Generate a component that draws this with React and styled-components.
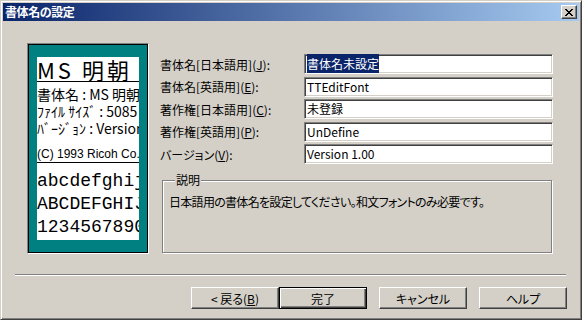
import styled, { createGlobalStyle, css } from 'styled-components'

const GlobalStyle = createGlobalStyle`
  html, body {
    margin: 0;
    padding: 0;
    background: #d4d0c8;
  }
  body {
    font-family: "Noto Sans CJK JP", "Liberation Sans", sans-serif;
    font-size: 12px;
    color: #000;
    font-feature-settings: "palt";
  }
  * { box-sizing: border-box; }
`

const raised = css`
  border: 1px solid;
  border-color: #fff #404040 #404040 #fff;
  box-shadow: inset -1px -1px #808080, inset 1px 1px #d4d0c8;
`

const Window = styled.div`
  width: 582px;
  height: 320px;
  display: flex;
  flex-direction: column;
  background: #d4d0c8;
  border: 1px solid;
  border-color: #d4d0c8 #404040 #404040 #d4d0c8;
  box-shadow: inset 1px 1px #fff, inset -1px -1px #808080;
  padding: 2px;
`

const TitleBar = styled.div`
  height: 18px;
  display: flex;
  align-items: center;
  justify-content: space-between;
  padding: 0 2px;
  background: linear-gradient(to right, #0a246a, #a6caf0);
`

const Title = styled.span`
  color: #fff;
  font-weight: bold;
  font-size: 12px;
  line-height: 18px;
  letter-spacing: -0.4px;
`

const CloseBtn = styled.div`
  width: 16px;
  height: 14px;
  display: flex;
  align-items: center;
  justify-content: center;
  background: #d4d0c8;
  ${raised}
`

const Main = styled.div`
  display: flex;
  padding: 22px 0 0 24px;
`

const Preview = styled.div`
  width: 122px;
  height: 211px;
  border: 1px solid;
  border-color: #808080 #fff #fff #808080;
`

const PreviewFrame = styled.div`
  height: 100%;
  border: 1px solid #000;
  background: #008080;
  padding: 12px 8px;
`

const Paper = styled.div`
  height: 183px;
  background: #fff;
  overflow: hidden;
  white-space: nowrap;
  font-feature-settings: normal;
`

const Heading = styled.div`
  font-size: 22px;
  line-height: 24px;
  letter-spacing: 3px;
  border-bottom: 1px solid #000;
`

const Info = styled.div`
  font-family: ${p => (p.$latin ? '"Liberation Sans", sans-serif' : 'inherit')};
  font-size: ${p => p.$size || 14}px;
  line-height: ${p => p.$lh || 17}px;
  margin-top: ${p => p.$mt || 0}px;
  ${p => p.$rule && 'border-bottom: 1px solid #000;'}
`

const Sample = styled.div`
  padding-top: 7px;
  font-family: "Liberation Mono", monospace;
  font-size: 18px;
  line-height: 23px;
`

const Right = styled.div`
  width: 393px;
  margin-left: 11px;
  padding-top: 11px;
  display: flex;
  flex-direction: column;
`

const Row = styled.div`
  display: flex;
  align-items: center;
  height: 20px;
  margin-bottom: ${p => (p.$last ? 0 : 2.5)}px;
`

const Label = styled.div`
  width: 144px;
`

const Field = styled.div`
  width: 249px;
  height: 20px;
  background: #fff;
  border: 1px solid;
  border-color: #808080 #fff #fff #808080;
  box-shadow: inset 1px 1px #404040, inset -1px -1px #d4d0c8;
  padding: 0 2px;
  line-height: 18px;
  white-space: nowrap;
`

const Selected = styled.span`
  background: #0a246a;
  color: #fff;
  padding: 1px 0;
`

const Group = styled.fieldset`
  margin: 9px 0 0 2px;
  width: 390px;
  height: 80px;
  border: 1px solid #808080;
  box-shadow: inset 1px 1px #fff, 1px 1px #fff;
  padding: 6px 6px 0;
  letter-spacing: -0.7px;
`

const Legend = styled.legend`
  margin-left: 6px;
  padding: 0 1px;
  line-height: 14px;
  letter-spacing: 0;
  background: #d4d0c8;
`

const Separator = styled.div`
  margin: 20px 13px 0 12px;
  height: 2px;
  border-top: 1px solid #808080;
  border-bottom: 1px solid #fff;
`

const Buttons = styled.div`
  display: flex;
  justify-content: flex-end;
  padding: 11px 12px 0 0;
`

const Button = styled.div`
  width: 88px;
  height: 22px;
  margin-left: ${p => p.$gap || 0}px;
  display: flex;
  align-items: center;
  justify-content: center;
  ${p =>
    p.$default
      ? css`
          border: 1px solid #000;
          box-shadow: inset 1px 1px #fff, inset -1px -1px #404040, inset -2px -2px #808080;
        `
      : raised}
`

const closePixels = [
  [0, 0], [1, 0], [6, 0], [7, 0],
  [1, 1], [2, 1], [5, 1], [6, 1],
  [2, 2], [3, 2], [4, 2], [5, 2],
  [3, 3], [4, 3],
  [2, 4], [3, 4], [4, 4], [5, 4],
  [1, 5], [2, 5], [5, 5], [6, 5],
  [0, 6], [1, 6], [6, 6], [7, 6],
]

const CloseIcon = () => (
  <svg width="8" height="7" viewBox="0 0 8 7" shapeRendering="crispEdges">
    {closePixels.map(([x, y]) => (
      <rect key={`${x}-${y}`} x={x} y={y} width="1" height="1" fill="#000" />
    ))}
  </svg>
)

const fields = [
  { label: '書体名[日本語用]', key: 'J', value: '書体名未設定', selected: true },
  { label: '書体名[英語用]', key: 'E', value: 'TTEditFont' },
  { label: '著作権[日本語用]', key: 'C', value: '未登録' },
  { label: '著作権[英語用]', key: 'P', value: 'UnDefine' },
  { label: 'バージョン', key: 'V', value: 'Version 1.00' },
]

const App = () => (
  <>
    <GlobalStyle />
    <Window>
      <TitleBar>
        <Title>書体名の設定</Title>
        <CloseBtn><CloseIcon /></CloseBtn>
      </TitleBar>
      <Main>
        <Preview>
          <PreviewFrame>
            <Paper>
              <Heading>MS 明朝</Heading>
              <Info $mt={4}>書体名 : MS 明朝</Info>
              <Info>ﾌｧｲﾙ ｻｲｽﾞ : 5085 KB</Info>
              <Info>ﾊﾞｰｼﾞｮﾝ : Version 1.00</Info>
              <Info $latin $size={12} $lh={16} $mt={9} $rule>(C) 1993 Ricoh Co., Ltd.</Info>
              <Sample>
                <div>abcdefghij</div>
                <div>ABCDEFGHIJ</div>
                <div>1234567890</div>
              </Sample>
            </Paper>
          </PreviewFrame>
        </Preview>
        <Right>
          {fields.map((f, i) => (
            <Row key={f.key} $last={i === fields.length - 1}>
              <Label>{f.label}(<u>{f.key}</u>):</Label>
              <Field>{f.selected ? <Selected>{f.value}</Selected> : f.value}</Field>
            </Row>
          ))}
          <Group>
            <Legend>説明</Legend>
            日本語用の書体名を設定してください。和文フォントのみ必要です。
          </Group>
        </Right>
      </Main>
      <Separator />
      <Buttons>
        <Button>&lt; 戻る(<u>B</u>)</Button>
        <Button $default>完了</Button>
        <Button $gap={12}>キャンセル</Button>
        <Button $gap={12}>ヘルプ</Button>
      </Buttons>
    </Window>
  </>
)

export default App
